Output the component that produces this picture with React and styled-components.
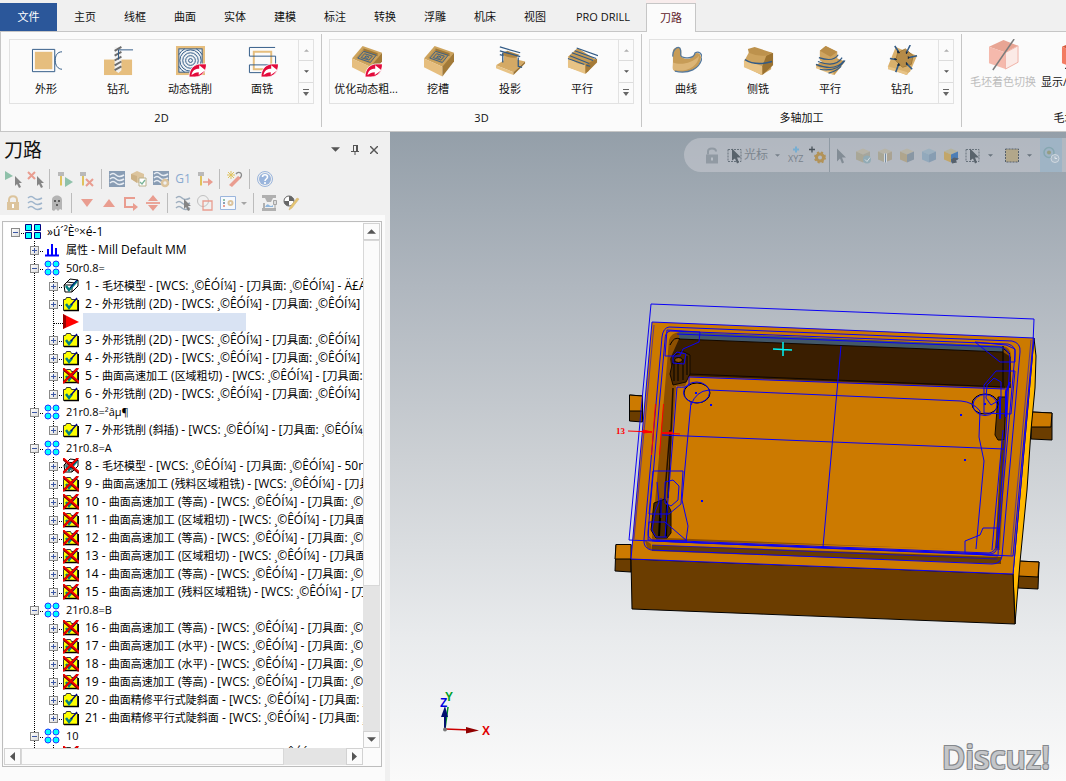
import React from "react";
import styled, { createGlobalStyle, css } from "styled-components";

const GlobalStyle = createGlobalStyle`
  * { box-sizing: border-box; }
  html, body { margin: 0; padding: 0; }
  body, button {
    font-family: "Open Sans", "Noto Sans CJK SC", sans-serif;
    font-size: 11px;
    line-height: 16px;
    color: #111;
  }
  button { margin: 0; padding: 0; border: 0; background: none; }
  svg { display: block; flex: none; }
`;

/* ---------- shell ---------- */
const Shell = styled.div`
  display: flex;
  flex-direction: column;
  height: 100vh;
  overflow: hidden;
  background: #f0f0f0;
`;
const Body = styled.main`
  display: flex;
  flex: 1;
  min-height: 0;
`;

/* ---------- ribbon ---------- */
const TabBar = styled.nav`
  display: flex;
  align-items: flex-end;
  flex: none;
  height: 32px;
  border-bottom: 1px solid #c6c6c6;
`;
const Tab = styled.button`
  flex: none;
  min-width: ${(p) => (p.$wide ? 86 : 50)}px;
  height: 28px;
  padding: 0 14px;
  white-space: nowrap;
  ${(p) => p.$file && css`
    width: 57px;
    margin-right: 3px;
    background: #2b579a;
    color: #fff;
  `}
  ${(p) => p.$active && css`
    height: 29px;
    margin-bottom: -1px;
    padding: 0 12px;
    background: #fbfbfb;
    border: 1px solid #c6c6c6;
    border-bottom: 0;
    color: #5e2129;
    box-shadow: 0 -4px 0 #f8ecec;
  `}
`;
const Ribbon = styled.section`
  display: flex;
  flex: none;
  height: 100px;
  padding: 2px 0 4px 1px;
  overflow: hidden;
  background: #fbfbfb;
  border-left: 1px solid #c6c6c6;
  border-bottom: 1px solid #c6c6c6;
`;
const Group = styled.div`
  display: flex;
  flex-direction: column;
  flex: none;
  width: ${(p) => p.$width || 320}px;
  padding: 5px 7px 0;
  border-right: 1px solid #c6c6c6;
`;
const GroupLabel = styled.div`
  margin-top: 6px;
  text-align: center;
`;
const Gallery = styled.div`
  display: flex;
  height: 65px;
  border: 1px solid #e2e2e2;
`;
const Tool = styled.button`
  display: flex;
  flex-direction: column;
  align-items: center;
  gap: 4px;
  width: 72px;
  padding-top: 5px;
  white-space: nowrap;
`;
const GallerySpin = styled.div`
  display: flex;
  flex-direction: column;
  flex: 1;
  border-left: 1px solid #e2e2e2;
`;
const SpinButton = styled.button`
  display: flex;
  align-items: center;
  justify-content: center;
  flex: 1;
  & + & { border-top: 1px solid #dcdcdc; }
`;
const StockTools = styled.div`
  display: flex;
  gap: 5px;
  height: 65px;
  padding-left: 1px;
`;
const StockTool = styled.button`
  display: flex;
  flex-direction: column;
  align-items: center;
  flex: none;
  gap: 3px;
  height: 54px;
  white-space: nowrap;
  color: ${(p) => (p.disabled ? "#bdbdbd" : "#111")};
`;

/* ---------- toolpath panel ---------- */
const Panel = styled.aside`
  display: flex;
  flex-direction: column;
  flex: none;
  width: 390px;
  background: #f0f0f0;
`;
const PanelHead = styled.header`
  display: flex;
  align-items: center;
  height: 35px;
  padding: 0 7px 0 4px;
`;
const PanelTitle = styled.h1`
  flex: 1;
  margin: 0;
  font-size: 19px;
  line-height: 28px;
  font-weight: 400;
`;
const HeadButton = styled.button`
  display: flex;
  align-items: center;
  justify-content: center;
  width: 19px;
  height: 18px;
`;
const ToolRow = styled.div`
  display: flex;
  align-items: center;
  height: 24px;
  padding-left: 2px;
`;
const MiniButton = styled.button`
  display: flex;
  align-items: center;
  justify-content: center;
  gap: 5px;
  flex: none;
  width: ${(p) => p.$width || 22}px;
  height: 22px;
`;
const Separator = styled.span`
  flex: none;
  width: 1px;
  height: 20px;
  margin: 0 4px 0 3px;
  background: #bcbcbc;
`;
const TreeArea = styled.div`
  display: flex;
  flex: 1;
  min-height: 0;
  margin-right: 5px;
  padding: 6px 3px 14px 2px;
  background: #fbfbfb;
`;
const TreeFrame = styled.div`
  display: grid;
  grid-template-columns: minmax(0, 1fr) 17px;
  grid-template-rows: minmax(0, 1fr) 17px;
  flex: 1;
  padding: 1px;
  background: #fbfbfb;
  border: 1px solid #bdbdbd;
`;
const Tree = styled.ul`
  margin: 0;
  padding: 0 0 0 2px;
  list-style: none;
  overflow: hidden;
  background: #fff;
`;
const Row = styled.li`
  display: flex;
  height: 18px;
  white-space: nowrap;
  color: #000;
`;
const dots = "repeating-linear-gradient(to bottom, #000 0 1px, transparent 1px 2px)";
const Guide = styled.span`
  display: flex;
  align-items: center;
  justify-content: center;
  flex: none;
  width: 19px;
  padding-top: 1px;
  background: ${(p) => (p.$line ? dots : "none")} 9px 0 / 1px ${(p) => (p.$line === "half" ? "9px" : "18px")} no-repeat;
`;
const Link = styled.span`
  flex: none;
  width: ${(p) => (p.$leaf ? 9 : 4)}px;
  margin-left: ${(p) => (p.$leaf ? -9 : -4)}px;
  background: repeating-linear-gradient(to right, #000 0 1px, transparent 1px 2px) 0 10px / 100% 1px no-repeat;
`;
const Expander = styled.button`
  display: flex;
  align-items: center;
  justify-content: center;
  width: 9px;
  height: 9px;
  background: linear-gradient(135deg, #fff, #dcdcdc);
  border: 1px solid #8a8a8a;
`;
const NodeIcon = styled.span`
  flex: none;
  width: 16px;
  padding-top: 1px;
  margin-right: 6px;
`;
const NodeText = styled.span`
  font-size: ${(p) => (p.$group ? 11 : 12)}px;
  line-height: 18px;
`;
const Han = styled.span`
  font-size: 11px;
`;
const InsertSlot = styled.span`
  width: 163px;
  margin-left: -2px;
  background: #d9e3f3;
`;
const ScrollBar = styled.div`
  display: flex;
  flex-direction: ${(p) => (p.$vertical ? "column" : "row")};
  background: #e4e4e4;
`;
const ScrollButton = styled.button`
  display: flex;
  align-items: center;
  justify-content: center;
  flex: none;
  width: 17px;
  height: 17px;
  background: #fbfbfb;
  border: 1px solid #d2d2d2;
`;
const ScrollTrack = styled.div`
  display: flex;
  flex-direction: ${(p) => (p.$vertical ? "column" : "row")};
  flex: 1;
  min-height: 0;
`;
const ScrollThumb = styled.div`
  flex: 0 0 ${(p) => p.$size};
  background: #fbfbfb;
  border: 1px solid #d8d8d8;
`;

/* ---------- graphics view ---------- */
const View = styled.section`
  position: relative;
  flex: 1;
  min-width: 0;
  overflow: hidden;
  background: linear-gradient(#949fa9 0, #b0b7bf 24%, #ccd0d4 50%, #e9ebed 78%, #fafafa 100%);
`;
const SelectionBar = styled.div`
  position: absolute;
  top: 6px;
  left: 294px;
  right: 0;
  display: flex;
  align-items: center;
  height: 34px;
  padding-left: 17px;
  overflow: hidden;
  background: rgba(212, 212, 220, 0.45);
  border-radius: 17px 0 0 17px;
`;
const BarButton = styled.button`
  display: flex;
  align-items: center;
  justify-content: center;
  flex: none;
  gap: 4px;
  width: 22px;
  height: 34px;
  font-size: 12px;
  color: #7d868f;
  background: ${(p) => (p.$on ? "#9fb4c5" : "none")};
  ${(p) => p.$menu && css`
    justify-content: flex-start;
    gap: 7px;
    width: 39px;
    padding-left: 3px;
  `}
`;
const CursorButton = styled(BarButton)`
  justify-content: flex-start;
  gap: 1px;
  width: 62px;
  padding-left: 4px;
`;
const CursorLabel = styled.span`
  margin-right: 6px;
`;
const BarSeparator = styled.span`
  flex: none;
  width: 1px;
  height: 34px;
  background: #8f9aa4;
`;
const Watermark = styled.div`
  position: absolute;
  right: 16px;
  bottom: 4px;
  font-family: "Open Sans", sans-serif;
  font-size: 32px;
  line-height: 40px;
  font-weight: 600;
  color: #c4c6c9;
  text-shadow: -1px -1px 0 #85888c, 1px -1px 0 #85888c, -1px 1px 0 #85888c, 1px 1px 0 #85888c;
`;

/* ---------- small glyphs ---------- */
const Caret = ({ up, color = "#555", w = 8 }) => (
  <svg width={w} height="5" viewBox="0 0 8 4"><path d={up ? "M0 4h8L4 0z" : "M0 0h8L4 4z"} fill={color} /></svg>
);
const MoreCaret = () => (
  <svg width="6" height="7" viewBox="0 0 6 7"><path d="M0 0h6v1H0zM0 3h6L3 7z" fill="#666" /></svg>
);

/* ---------- ribbon icons ---------- */
const BLUE = "#315a86";
const Badge = () => (
  <g>
    <path d="M14.500 33c0-8 5-13.500 12-13.500h6c0 8-5 13.500-12 13.500z" fill="#e30b3c" stroke="#fff" strokeWidth=".8" />
    <path d="M17 31c1-5 4-6.500 8-6.500v-3.500l6.500 5-7 5v-3c-3 0-5 1-7.500 3z" fill="#fff" />
  </g>
);
const Pocket = () => (
  <g>
    <path d="M1 14 12 1l20 7-11 15z" fill="#cda35c" />
    <path d="M1 14v9l19 9.500v-10z" fill="#e6be7e" />
    <path d="M20 22.500v10l12-15.500V8z" fill="#a27a38" />
    <path d="M5 13.500l8-10 14.500 5-8 10.500z" fill="#bb9351" />
    <path d="M13 3.500l14.500 5v3L13 6.500z" fill="#a07836" />
    <path d="M7 13.500l6-7 13 4-6 7.500zM10.500 13l3.500-4 8 2.500-3.500 4zM14 12.800l1.500-1.500 3 1-1.500 1.500z" fill="none" stroke="#3c6288" strokeWidth="1" />
  </g>
);
const art = {
  contour: <g><path d="M4 7h18v18H4z" fill="#e6be7e" /><path d="M1.500 4.500h23v23h-23z" fill="none" stroke={BLUE} /><path d="M32 7c-5 0-7 4-7 9s3 9 7 9" fill="none" stroke={BLUE} /></g>,
  drill: <g><path d="M1 15h29v16H1z" fill="#e6be7e" /><path d="M12 2h7v24l-3 3-4-3z" fill="#f1f1f1" /><path d="M12 6l7-4M12 11l7-4M12 16l7-4M12 21l7-4M12 26l7-4" stroke="#6c6c6c" strokeWidth="2" /><path d="M16 15V5h15" fill="none" stroke={BLUE} /></g>,
  dynamic: <g><path d="M1 1h30v30H1z" fill="#e6be7e" /><rect x="4" y="4" width="24" height="24" fill="#eef1f4" stroke={BLUE} /><g fill="none" stroke={BLUE}><circle cx="16" cy="16" r="2" /><circle cx="16" cy="16" r="5" /><circle cx="16" cy="16" r="8" /><circle cx="16" cy="16" r="11" /><path d="M4 10q2-4 6-6M22 4q4 2 6 6M4 22q2 4 6 6" /></g><Badge /></g>,
  face: <g><path d="M7 7h18v18H7z" fill="none" stroke="#e6be7e" strokeWidth="2" /><path d="M29 2.500H2.500v9h27v9h-27v8H16" fill="none" stroke={BLUE} /><Badge /></g>,
  optirough: <g><Pocket /><Badge /></g>,
  pocket: <Pocket />,
  project: <g><path d="M1 21 14 13l17 4-12 11z" fill="#d5aa65" /><path d="M1 21v3l18 7v-3z" fill="#e8c385" /><path d="M19 28v3l12-12v-2z" fill="#9b7230" /><path d="M9 9v12q6 4 14 0V10z" fill="#d4a965" /><path d="M8 8l5-2 12 4-3 3q-8 1-14-3z" fill="#ad8443" /><path d="M5 2l21 6M5 6l21 6M5 10l4 1M8 8v10M24 13v9l4 1" fill="none" stroke={BLUE} strokeWidth="1.300" /></g>,
  parallel: <g><path d="M1 12 11 3l20 13-9 11-3 2L1 23z" fill="#c69b55" /><path d="M1 12q10 9 18 8v10L1 23z" fill="#e8c385" /><path d="M19 20v10l12-12v-4z" fill="#a57a37" /><path d="M10 3l22 8M8 6l22 8M5 8l22 8M3 11l20 8M1 14l17 6M20 21l4 1" stroke={BLUE} strokeWidth="1.100" fill="none" /></g>,
  curve: <g><path d="M2 6c0-3 6-5 8-2 2 4-2 8 4 10 6 1 9-1 10-5 4-2 7 0 7 4-1 12-12 17-27 14-2-1-2-3-2-5z" fill="#c79c57" /><path d="M2 18c8 3 20 1 27-7-1 11-12 17-26 15-2-1-1-4-1-8z" fill="#dcb577" /><path d="M2 12C1 6 6 1 9 3c3 5-2 9 5 10 6 1 10-1 11-5 4-2 7 1 7 5-2 12-14 17-28 14" fill="none" stroke="#54789c" strokeWidth="1.300" /></g>,
  swarf: <g><path d="M1 17 8 4l22 4-1 17-10 6-18-9z" fill="#cda35e" /><path d="M1 15v8l19 8v-9z" fill="#e8c385" /><path d="M20 22v9l11-10V8l-7 3z" fill="#9b7230" /><path d="M5 4l7-2 18 6-7 3q-8 1-17-3z" fill="#bd924d" /><path d="M2 15q11 7 28 2" fill="none" stroke={BLUE} strokeWidth="1.500" /></g>,
  multiparallel: <g><path d="M1 21 16 11l15 6-11 14-19-9z" fill="#c79b54" /><path d="M1 22v2l18 7v-3z" fill="#e8c385" /><path d="M5 6 11 1l12 6v10q-8 5-18-1z" fill="#cfa560" /><path d="M5 6 11 1l12 6-7 5z" fill="#b98d48" /><path d="M4 13q15 5 20-3M3 17q18 7 25-4M1 20q20 8 29-4M5 25q18 3 26-9M14 29q8-2 13-7" fill="none" stroke={BLUE} strokeWidth="1.200" /></g>,
  multidrill: <g><path d="M1 22 9 2l22 9-7 16-4 4-18-7z" fill="#d9b06c" /><path d="M1 22v3l20 6v-3z" fill="#e8c385" /><path d="m11 8 8-4 8 7-2 9-9 3-7-7z" fill="#b58b48" stroke="#a07836" /><path d="M8 1l4 6M24 0l-4 8M3 14l6 1M31 11l-8 2M12 20l-3 8M20 19l6 6" stroke={BLUE} strokeWidth="1.600" /><path d="M11 6l2 2-2 0zM20 7v2l1-1zM8 14l2 1-2 0zM22 12v2l1-1zM12 19l-1 2 2 0zM20 18l0 2 1 0z" fill="#172a40" stroke="#172a40" /></g>,
  shade: <g><path d="M1 8 16 1l15 6-13 7z" fill="#e8a594" /><path d="M1 8l17 6v17L1 25z" fill="#f5b9ac" /><path d="M18 14 31 7v17l-13 7z" fill="#fbeae6" stroke="#efb1a5" /><path d="M27 0 5 32" stroke="#7c7c7c" strokeWidth="1.500" /></g>,
  show: <g><path d="M1 8 16 1l15 6-13 7z" fill="#d4583b" /><path d="M1 8l17 6v17L1 25z" fill="#f27b62" /><path d="M4 31l3-5 4 5z" fill="#111" /></g>,
};
const ToolIcon = ({ name }) => <svg width="31" height="32" viewBox="0 0 32 33">{art[name]}</svg>;

/* ---------- panel toolbar icons ---------- */
const G = "#8fc1aa", R = "#e99d90", N = "#899db4", T = "#dcc49d", K = "#858585", B = "#9ab5dc";
const Arrow = ({ x = 8, y = 5, c = K }) => <path d={`M${x} ${y}v10l2-2 2 4 2-1-2-4h3z`} fill={c} />;
const Holder = () => <g><path d="M1 1h6v4H1z" fill="#b9b9b9" /><path d="M3 5h2v9l-1 1-1-1z" fill="#dfc25e" /></g>;
const waves = (c, y = [3, 8, 13]) => y.map((v) => <path key={v} d={`M1 ${v}q3-3 6 0t8 0`} fill="none" stroke={c} strokeWidth="1.500" />);
const mini = {
  selAll: <g><path d="M0 0v9l8-4z" fill={G} /><Arrow x={10} y={5} /></g>,
  selNone: <g><path d="M1 1l7 7M8 1 1 8" stroke={R} strokeWidth="2" /><Arrow x={10} y={5} /></g>,
  regen: <g><Holder /><path d="M8 6v10l8-5z" fill={G} /></g>,
  regenX: <g><Holder /><path d="M7 8l7 7M14 8l-7 7" stroke={R} strokeWidth="2" /></g>,
  backplot: <g><path d="M0 0h16v16H0z" fill={N} />{waves("#e9eef4", [4, 8, 12])}</g>,
  verify: <g><path d="M0 3l6-3 7 3v6l-6 3-7-4z" fill={T} /><path d="M0 3l6 2v7L0 8z" fill="#cdb286" /><path d="M8 7h7v8H8z" fill="#fff" stroke="#b9b08c" /><path d="M9 11l2 2 3-4" fill="none" stroke="#79b498" strokeWidth="1.300" /></g>,
  sim: <g><path d="M0 0h16v14H0z" fill={N} />{waves("#e9eef4", [3, 7, 11])}<circle cx="12" cy="12" r="3" fill="#f0f0f0" stroke={T} strokeWidth="2.500" /></g>,
  post: <g><Holder /><path d="M6 11h8" stroke={R} strokeWidth="1.500" /><path d="M11 7l5 4-5 4z" fill={R} /></g>,
  feed: <g><path d="M2 14 11 5l3 2-9 9z" fill={R} /><path d="M9 3c3-4 8 0 4 4" fill="none" stroke="#8b8b8b" strokeWidth="1.300" /><path d="M4 0v8M0 4h8M1 1l6 6M7 1 1 7" stroke="#dfc25e" /></g>,
  help: <g><circle cx="8" cy="8" r="7.500" fill="#f0f0f0" stroke={B} /><circle cx="8" cy="8" r="6" fill={B} /><path d="M5.500 6c0-3 5-3 5 0 0 2-2.500 2-2.500 4M8 11v2" fill="none" stroke="#fff" strokeWidth="1.600" /></g>,
  lock: <g><path d="M4 7V5c0-5 8-5 8 0v2" fill="none" stroke={T} strokeWidth="2" /><path d="M2 7h12v8H2z" fill={T} /><path d="M7 9h2v4H7z" fill="#fff" /></g>,
  wave: waves("#9fb5cc"),
  ghost: <g><path d="M3 15V5c0-6 10-6 10 0v10l-2-1-2 2-2-2-2 2z" fill="#b4b4b4" /><path d="M5 5h2v2H5zM9 5h2v2H9zM7 9h2v2H7z" fill="#5d5d5d" /></g>,
  down: <path d="M2 4h12L8 12z" fill={R} />,
  up: <path d="M2 12h12L8 4z" fill={R} />,
  after: <g><path d="M12 3H2v9h9" fill="none" stroke={R} strokeWidth="2" /><path d="M10 8l5 4-5 4z" fill={R} /></g>,
  scroll: <g><path d="M1 8h14" stroke={R} strokeWidth="1.800" /><path d="M3 6h10L8 0zM3 10h10l-5 6z" fill={R} /></g>,
  waveSel: <g>{waves("#9fafbf")}<Arrow x={9} y={4} /></g>,
  geo: <g><circle cx="6" cy="6" r="5.500" fill="none" stroke="#c0c0c0" /><path d="M6 6h9v9H6z" fill="none" stroke={R} strokeWidth="1.300" /></g>,
  options: <g><path d="M.5 1.500h15v13H.5z" fill="#f6f9fd" stroke={B} /><path d="M3 4h2v2H3z" fill={G} /><path d="M3 7h2v2H3z" fill={N} /><path d="M3 10h2v2H3z" fill={R} /><circle cx="10.500" cy="8" r="2" fill="none" stroke={T} strokeWidth="2" /></g>,
  machine: <g><path d="M1 0h14v3H1zM4 3h8l-2 4H6zM1 13h14v3H1zM2 8h2v5H2z" fill="#b0b0b0" /><path d="M4 12q2-4 4-2t4 0v2z" fill="#8fb6dd" /><path d="M12.500 5.500h3v4h-3z" fill="#dcdcdc" stroke="#a5a5a5" /><path d="M14 10v4" stroke="#a5a5a5" /></g>,
  edit: <g><circle cx="6" cy="6" r="5" fill="#fff" stroke="#666" /><path d="M6 6V1a5 5 0 0 1 5 5zM6 6v5a5 5 0 0 1-5-5z" fill="#666" /><path d="M6 15l1-3 7-9 2 1-7 9z" fill="#e6c66f" stroke="#d5b57a" strokeWidth=".6" /></g>,
};
const Mini = ({ name }) => <svg width="16" height="16" viewBox="0 0 16 16" overflow="visible">{mini[name]}</svg>;

/* ---------- selection bar icons ---------- */
const Cube = ({ a = "#b7b4a8", b = "#a9a797", c = "#a3adb7" }) => (
  <g><path d="M1 4l7-3 7 3-7 3z" fill={a} /><path d="M1 4l7 3v8l-7-3z" fill={b} /><path d="M8 7l7-3v8l-7 3z" fill={c} /></g>
);
const bar = {
  unlock: <g><path d="M4 7V4c0-4 8-4 8 0" fill="none" stroke="#919aa3" strokeWidth="2" /><path d="M2 7h12v9H2z" fill="#919aa3" /><path d="M7 10h2v3H7z" fill="#b8bec6" /></g>,
  pick: <g><path d="M1 2h13v12H1z" fill="none" stroke="#68737d" strokeDasharray="2 1" /><path d="M5 1v12l3-2 2 5 2-1-2-5h4z" fill="#59636c" /></g>,
  xyz: <g><path d="M8-1v6M5 2h6" stroke="#78aed1" strokeWidth="2" /><text x="0" y="14" fontFamily="Open Sans" fontSize="9" fill="#78828c">XYZ</text></g>,
  gear: <g><path d="M2-1v6M-1 2h6" stroke="#49525a" strokeWidth="1.300" /><circle cx="10" cy="10" r="3.500" fill="none" stroke="#b29359" strokeWidth="3" /><circle cx="10" cy="10" r="5" fill="none" stroke="#b29359" strokeWidth="2" strokeDasharray="2 2" /></g>,
  arrow: <path d="M4 1v13l3-3 2 5 2-1-2-5h4z" fill="#828c95" />,
  cube1: <g><Cube c="#a7a69c" /><circle cx="12" cy="12" r="4" fill="#92abb5" /><path d="M10 12l2 2 3-4" fill="none" stroke="#d5dbe0" /></g>,
  cube2: <g><Cube c="#aaa393" /><path d="M7 6h3v9H7z" fill="#d5d9de" /><path d="M8 6h1v9H8z" fill="#738ba3" /></g>,
  cube3: <Cube b="#afa58d" c="#8997a4" />,
  cube4: <Cube a="#9db1c0" b="#92a9bc" c="#879db2" />,
  cube5: <g><Cube a="#b5b39f" b="#c2a669" c="#4d7eb5" /><path d="M8 12l3-2 5 1-3 2 1 2-5 1z" fill="#56616c" /></g>,
  box: <path d="M1.500 1.500h13v13h-13z" fill="#b2a78a" stroke="#56616c" strokeDasharray="2 1" />,
  modes: <g><circle cx="6" cy="5" r="5" fill="none" stroke="#86a7b0" strokeWidth="1.500" /><circle cx="6" cy="5" r="2" fill="#959d82" /><circle cx="12" cy="11" r="4" fill="#a9bac8" stroke="#d0d8e0" /><path d="M12 9v2h2" fill="none" stroke="#e0e6ec" /></g>,
};
const BarIcon = ({ name }) => <svg width="16" height="17" viewBox="0 0 16 16" overflow="visible">{bar[name]}</svg>;

/* ---------- tree icons ---------- */
const Check = () => <path d="M3 8l3 4 8-9" fill="none" stroke="#008080" strokeWidth="2.500" />;
const node = {
  machine: <g fill="#00ffff" stroke="#000080"><path d="M.5.500h6v6h-6zM9.500.500h6v6h-6zM.5 8.500h6v6h-6zM9.500 8.500h6v6h-6z" /></g>,
  props: <path d="M1 13.500h14M4 13V7M8 13V2M12 13V6" stroke="#0000ff" strokeWidth="2" fill="none" />,
  group: <g fill="#00ffff" stroke="#2038ff"><circle cx="4" cy="4" r="3" /><circle cx="12" cy="4" r="3" /><circle cx="4" cy="12" r="3" /><circle cx="12" cy="12" r="3" /></g>,
  stock: <g><path d="M1 7l6-6 8 1v6l-6 6H2z" fill="#fff" stroke="#000" /><path d="M1 7h8l6-5M9 7v7M4 4l8 1" fill="none" stroke="#000" /><Check /><path d="M7 10l7-8" stroke="#000080" /></g>,
  folder: <g><path d="M.5 3.500h2l1-2h4l1 2h6v11H.5z" fill="#ffff00" stroke="#333" /><path d="M1 14.500h14.500V4" fill="none" stroke="#000" strokeWidth="1.500" /><path d="M3 8l3 4 3-4" fill="none" stroke="#008080" strokeWidth="2.500" /><path d="M8 9l6-7" stroke="#000080" strokeWidth="1.300" /></g>,
};
const Cross = () => <g><path d="M0 1l16 14M15 0 0 15" stroke="#700" strokeWidth="2.400" /><path d="M0 0l16 14M15 0 0 15" stroke="#f00000" strokeWidth="1.800" /></g>;
const NodeGlyph = ({ kind, off }) => (
  <svg width="16" height="16" viewBox="0 0 16 16">
    {kind === "insert" ? <path d="M0 0v15l16-7z" fill="#f00" /> : node[kind]}
    {kind === "insert" && <path d="M0 0v15l3-2V2z" fill="#900" />}
    {off && <Cross />}
  </svg>
);

/* ---------- data ---------- */
const tabs = ["主页", "线框", "曲面", "实体", "建模", "标注", "转换", "浮雕", "机床", "视图", "PRO DRILL"];
const groups = [
  { label: "2D", tools: [["contour", "外形"], ["drill", "钻孔"], ["dynamic", "动态铣削"], ["face", "面铣"]] },
  { label: "3D", tools: [["optirough", "优化动态粗..."], ["pocket", "挖槽"], ["project", "投影"], ["parallel", "平行"]] },
  { label: "多轴加工", tools: [["curve", "曲线"], ["swarf", "侧铣"], ["multiparallel", "平行"], ["multidrill", "钻孔"]] },
];
const WCS = "[WCS: ¸©ÊÓÍ¼] - [刀具面: ¸©ÊÓÍ¼]";
const op = (n, name, kind = "folder", off = false, extra = "") => ({ level: 2, kind, off, text: `${n} - ${name} - ${WCS}${extra}` });
const group = (text) => ({ level: 1, kind: "group", open: true, text });
const rows = [
  { level: 0, kind: "machine", open: true, text: "»ú´²Èº×é-1" },
  { level: 1, kind: "props", text: "属性 - Mill Default MM" },
  group("50r0.8="),
  op(1, "毛坯模型", "stock", false, " - Ä£Äâ"),
  op(2, "外形铣削 (2D)"),
  { level: 2, kind: "insert" },
  op(3, "外形铣削 (2D)"),
  op(4, "外形铣削 (2D)"),
  op(5, "曲面高速加工 (区域粗切)", "folder", true),
  op(6, "外形铣削 (2D)"),
  group("21r0.8=²âµ¶"),
  op(7, "外形铣削 (斜插)"),
  group("21r0.8=A"),
  op(8, "毛坯模型", "stock", true, " - 50r0.8"),
  op(9, "曲面高速加工 (残料区域粗铣)", "folder", true),
  op(10, "曲面高速加工 (等高)", "folder", true),
  op(11, "曲面高速加工 (区域粗切)", "folder", true),
  op(12, "曲面高速加工 (等高)", "folder", true),
  op(13, "曲面高速加工 (区域粗切)", "folder", true),
  op(14, "曲面高速加工 (等高)", "folder", true),
  op(15, "曲面高速加工 (残料区域粗铣)", "folder", true),
  group("21r0.8=B"),
  op(16, "曲面高速加工 (等高)", "folder", true),
  op(17, "曲面高速加工 (水平)", "folder", true),
  op(18, "曲面高速加工 (水平)", "folder", true),
  op(19, "曲面高速加工 (等高)", "folder", true),
  op(20, "曲面精修平行式陡斜面"),
  op(21, "曲面精修平行式陡斜面"),
  group("10"),
  op(22, "曲面高速加工 (区域粗切)", "folder", true),
];
const toolbar1 = ["selAll", "selNone", "|", "regen", "regenX", "|", "backplot", "verify", "sim", "g1", "post", "|", "feed", "|", "help"];
const toolbar2 = ["lock", "wave", "ghost", "|", "down", "up", "after", "scroll", "|", "waveSel", "geo", "options", "|", "machine", "edit"];

const G1 = styled.span`
  font-size: 12px;
  color: #8aaad0;
`;

/* Latin runs are set one size larger than the Chinese ones. */
const mixed = (text) =>
  text.split(/([\u4e00-\u9fff]+)/).map((part, i) => (i % 2 ? <Han key={i}>{part}</Han> : part));

function MiniToolbar({ items }) {
  return (
    <ToolRow>
      {items.map((n, i) =>
        n === "|" ? <Separator key={i} /> : (
          <MiniButton key={i} aria-label={n} $width={n === "options" ? 34 : 22}>
            {n === "g1" ? <G1>G1</G1> : <Mini name={n} />}
            {n === "options" && <Caret w={6} color="#a5a5a5" />}
          </MiniButton>
        )
      )}
    </ToolRow>
  );
}

function TreeRow({ row, next }) {
  const leaf = row.kind === "insert";
  const last = row.level === 2 && next && next.level < 2;
  return (
    <Row>
      {row.level > 0 && <Guide />}
      {row.level > 1 && <Guide $line="full" />}
      <Guide $line={row.level === 0 ? null : last ? "half" : "full"}>
        {!leaf && (
          <Expander aria-label={row.open ? "折叠" : "展开"}>
            <svg width="5" height="5" viewBox="0 0 5 5"><path d={row.open ? "M0 2h5v1H0z" : "M0 2h5v1H0zM2 0h1v5H2z"} fill="#3b57a4" /></svg>
          </Expander>
        )}
      </Guide>
      <Link $leaf={leaf} />
      <NodeIcon><NodeGlyph kind={row.kind} off={row.off} /></NodeIcon>
      {leaf ? <InsertSlot /> : <NodeText $group={row.kind === "group"}>{mixed(row.text)}</NodeText>}
    </Row>
  );
}

function Model() {
  return (
    <svg width="676" height="649" viewBox="390 132 676 649" role="img" aria-label="模具零件">
      <g stroke="#000" strokeLinejoin="round">
        <path d="M629.500 395l13 1v26l-13-1z" fill="#6b3d00" /><path d="M629.500 395l13 1v15h-13z" fill="#cc7a00" />
        <path d="M616 544.500h15V572l-16-1z" fill="#6b3d00" /><path d="M616 544.500h15V559h-16z" fill="#cc7a00" />
        <path d="M1032 412l20 1v27l-21-1z" fill="#6b3d00" /><path d="M1032 412l20 1-1 14h-20z" fill="#cc7a00" />
        <path d="M1018 561l21 1-1 27-20-1z" fill="#6b3d00" /><path d="M1018 561l21 1-1 15-20-1z" fill="#cc7a00" />
        <path d="M1034 338l2 18-1 32-4 42-4 60-7 72-5 62-2-50z" fill="#ffb800" />
        <path d="M631 559l382 15 2 50-383-15z" fill="#6b3d00" />
      </g>
      <path d="M652 322l382 16-21 236-382-15z" fill="#cc7a00" />
      {/* cavity walls */}
      <path d="M669 340q2-7 10-8l324 14q9 2 8 12l-2 30-9 162-347-10-1-2z" fill="#8d4f00" />
      <path d="M679 332l324 14v7l-324-14z" fill="#42586a" />
      <path d="M679 339l324 13 8 5v31l-322-12-16-1-3-16z" fill="#3a1e00" />
      <path d="M652 545l349 12v7l-349-13z" fill="#6b3d00" />
      <path d="M645 540l6 4 1 6-5-2z" fill="#8d4f00" />
      {/* cavity floor */}
      <path d="M689 377l316 12-3 60-7 102-329-13 4-70 6-82h9z" fill="#cc7a00" />
      <path d="M679 339l324 13M689 374l316 13" stroke="#110800" fill="none" />
      <path d="M670 430l-6 75M673 388l-5 110" stroke="#221000" strokeWidth="1.500" />
      {/* bosses */}
      <path d="M674 356l8-5 8 4v19l-4 8-13 3-3-11z" fill="#4a2800" stroke="#110800" />
      <path d="M674 361v20M678 361v20M683 359v21M687 356v19" stroke="#000" />
      <path d="M654 503l11-4 6 12v22l-4 5h-11l-5-8z" fill="#4a2900" stroke="#110800" />
      <path d="M661 500l-2 36M667 505l-1 32" stroke="#000" strokeWidth="2" />
      <path d="M998 397h8l-2 43h-6l-3-5z" fill="#5e3600" stroke="#110800" />
      <path d="M1003 440l-6 108" stroke="#5e3600" strokeWidth="3" />
      <g fill="none" stroke="#000"><ellipse cx="697" cy="393" rx="13" ry="10" /><ellipse cx="985" cy="404" rx="13" ry="10" /><path d="M1003 346v40M670 345q4-9 10-6M1010 354l-7-6" /></g>
      <g fill="none" stroke="#0a00f5" strokeWidth="1">
        <path d="M651 304l383 15-1 24-20 213-384-16z" />
        <path d="M652 322l382 16-21 236-382-15z" />
        <path d="M654 325l-20 214M1031 340l-20 215" strokeOpacity=".55" />
        <path d="M669 327l343 14q9 2 8 11l-18 204q-1 8-10 8l-341-14q-8-2-7-11l18-202q1-9 7-10z" />
        <path d="M670 331l338 13q8 2 7 10l-17 192q-2 8-8 8l-335-13q-8-2-7-9l17-192q0-8 5-9z" />
        <path d="M677 334l323 13q10 2 10 12l-4 72-10 115q-1 6-7 7l-333-13" />
        <path d="M689 377l316 12M689 377v8q-2 3-12 2l-12 150M1003 430l-11 120" />
        <path d="M652 541l345 14M652 545l345 14" strokeOpacity=".7" />
        <path d="M662 435l342 14M841 346l-18 201" />
        <path d="M691 405q5-14 18-15l252 11q12 1 19 10l-1 26 5 24-8 88M691 402l-9 98 6 26-2 15" />
        <path d="M667 330l33 2-1 10-16 7-3 7h-15zM673 356l4-4 9 2-2 10-11-1z" />
        <path d="M653 471h30l-2 33-12 10h-20zM665 482l8-2 6 6-1 14-7 6-6-3zM649 522h16l22 19-39-1z" />
        <path d="M657 482l2 20-4 10-3 18 4 7h11M661 498v20" />
        <path d="M975 342l31 3 9 4v13h-15zM984 385l12-14h19l-4 43-27-1zM987 385l7-7 7 4v17l-10 6-5-7z" />
        <path d="M1010 382l-4 10v25M1000 397v22" strokeWidth="2" />
        <path d="M965 553v-12l15-6 3-7h16l-1 28z" />
        <ellipse cx="696.500" cy="392.500" rx="13" ry="10.500" /><ellipse cx="985" cy="405" rx="12" ry="10.500" />
      </g>
      <path d="M710 404h2v2h-2zM701 500h2v2h-2zM960 414h2v2h-2zM964 459h2v2h-2zM695 392h2v2h-2zM984 403h2v2h-2z" fill="#0000ff" />
      <ellipse cx="678.500" cy="360" rx="4" ry="2.500" fill="#8d4f00" stroke="#000" />
      <path d="M773 349l19 1M783 342v14" stroke="#00f5f5" strokeWidth="1.500" />
      <g stroke="#f00" fill="#f00"><path d="M655.500 404l-4 51M663.500 404l-4 51M628 431l24 1M662 433l18 1" /><path d="M643 430l9 2-9 1zM672 432l-10 1 10 1z" /></g>
      <text x="616" y="434" fontFamily="Liberation Serif" fontSize="9" fontWeight="700" fill="#f00">13</text>
      {/* axis triad */}
      <g fontFamily="Liberation Sans" fontSize="12" fontWeight="700">
        <path d="M445 729l3-22" stroke="#008b28" strokeWidth="1.500" /><path d="M445 729v-18" stroke="#00106e" strokeWidth="2" />
        <path d="M441 717l4-11 3 11z" fill="#00106e" />
        <path d="M445 729l25 1" stroke="#c00" strokeWidth="1.500" /><path d="M466 727l13 3.500-13 3z" fill="#900000" />
        <circle cx="445" cy="729.500" r="2" fill="#777" />
        <text x="482" y="735" fill="#e00000">X</text><text x="445" y="701" fill="#00a028">Y</text><text x="440" y="707" fill="#0000e0">Z</text>
      </g>
    </svg>
  );
}

export default function App() {
  return (
    <Shell>
      <GlobalStyle />
      <TabBar>
        <Tab $file>文件</Tab>
        {tabs.map((t) => <Tab key={t} $wide={t.length > 2}>{t}</Tab>)}
        <Tab $active>刀路</Tab>
      </TabBar>
      <Ribbon>
        {groups.map((g) => (
          <Group key={g.label}>
            <Gallery>
              {g.tools.map(([icon, label]) => <Tool key={icon}><ToolIcon name={icon} /><span>{label}</span></Tool>)}
              <GallerySpin>
                <SpinButton aria-label="上一行"><Caret up w={5} color="#b0b0b0" /></SpinButton>
                <SpinButton aria-label="下一行"><Caret w={5} /></SpinButton>
                <SpinButton aria-label="更多"><MoreCaret /></SpinButton>
              </GallerySpin>
            </Gallery>
            <GroupLabel>{g.label}</GroupLabel>
          </Group>
        ))}
        <Group $width={206}>
          <StockTools>
            <StockTool disabled><ToolIcon name="shade" /><span>毛坯着色切换</span></StockTool>
            <StockTool><ToolIcon name="show" /><span>显示/隐藏毛坯</span></StockTool>
          </StockTools>
          <GroupLabel>毛坯</GroupLabel>
        </Group>
      </Ribbon>
      <Body>
        <Panel>
          <PanelHead>
            <PanelTitle>刀路</PanelTitle>
            <HeadButton aria-label="菜单"><Caret w={9} /></HeadButton>
            <HeadButton aria-label="固定"><svg width="8" height="10" viewBox="0 0 8 10"><path d="M2 0h5v6h1v1H4.500v3h-1V7H0V6h2zM3 1v5h2V1z" fill="#555" fillRule="evenodd" /></svg></HeadButton>
            <HeadButton aria-label="关闭"><svg width="8" height="8" viewBox="0 0 8 8"><path d="M0 0l8 8M8 0 0 8" stroke="#555" strokeWidth="1.400" /></svg></HeadButton>
          </PanelHead>
          <MiniToolbar items={toolbar1} />
          <MiniToolbar items={toolbar2} />
          <TreeArea>
            <TreeFrame>
              <Tree>
                {rows.map((r, i) => <TreeRow key={i} row={r} next={rows[i + 1]} />)}
              </Tree>
              <ScrollBar $vertical>
                <ScrollButton aria-label="向上"><Caret up w={9} /></ScrollButton>
                <ScrollTrack $vertical><ScrollThumb $size="70.5%" /></ScrollTrack>
                <ScrollButton aria-label="向下"><Caret w={9} /></ScrollButton>
              </ScrollBar>
              <ScrollBar>
                <ScrollButton aria-label="向左"><svg width="5" height="9" viewBox="0 0 5 9"><path d="M5 0v9L0 4.500z" fill="#555" /></svg></ScrollButton>
                <ScrollTrack><ScrollThumb $size="81%" /></ScrollTrack>
                <ScrollButton aria-label="向右"><svg width="5" height="9" viewBox="0 0 5 9"><path d="M0 0v9l5-4.500z" fill="#555" /></svg></ScrollButton>
              </ScrollBar>
            </TreeFrame>
          </TreeArea>
        </Panel>
        <View>
          <Model />
          <SelectionBar>
            <BarButton aria-label="锁定"><BarIcon name="unlock" /></BarButton>
            <CursorButton><BarIcon name="pick" /><CursorLabel>光标</CursorLabel><Caret w={5} color="#77808a" /></CursorButton>
            <BarButton aria-label="坐标"><BarIcon name="xyz" /></BarButton>
            <BarButton aria-label="设置"><BarIcon name="gear" /></BarButton>
            <BarSeparator />
            {["arrow", "cube1", "cube2", "cube3", "cube4", "cube5"].map((n) => (
              <BarButton key={n} aria-label={n}><BarIcon name={n} /></BarButton>
            ))}
            <BarButton $menu aria-label="选择方式"><BarIcon name="pick" /><Caret w={5} color="#68737d" /></BarButton>
            <BarButton $menu aria-label="窗选"><BarIcon name="box" /><Caret w={5} color="#68737d" /></BarButton>
            <BarButton $on aria-label="选择验证"><BarIcon name="modes" /></BarButton>
          </SelectionBar>
          <Watermark>Discuz!</Watermark>
        </View>
      </Body>
    </Shell>
  );
}
